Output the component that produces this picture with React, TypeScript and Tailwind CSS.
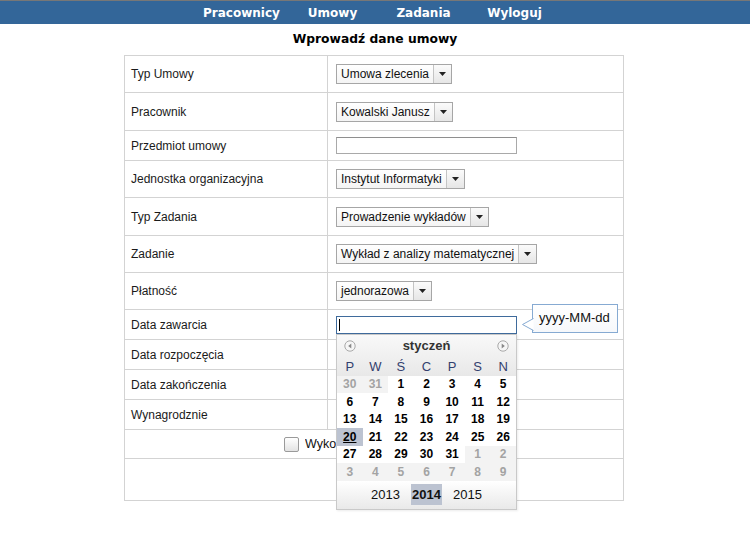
import React from "react";

const sans = "[font-family:'Liberation_Sans',Arial,sans-serif]";
const verdana = "[font-family:'DejaVu_Sans',Verdana,sans-serif]";

const Arrow = () => (
  <svg width="7" height="4" viewBox="0 0 7 4">
    <polygon points="0,0 7,0 3.5,4" fill="#222" />
  </svg>
);

const Select = ({ value }: { value: string }) => (
  <div className="inline-flex h-[20px] items-stretch border border-[#a6a6a6] bg-gradient-to-b from-white to-[#f4f4f4]">
    <span className={`${sans} flex items-center pl-[4px] pr-[4px] text-[12px] text-[#111]`}>
      {value}
    </span>
    <span className="flex w-[18px] items-center justify-center border-l border-[#c4c4c4] bg-gradient-to-b from-[#fbfbfb] to-[#e6e6e6]">
      <Arrow />
    </span>
  </div>
);

const TextInput = () => (
  <div className="h-[17px] w-[181px] border border-[#a9a9a9] border-t-[#8f8f8f] bg-white" />
);

const Circle = ({ dir }: { dir: "l" | "r" }) => (
  <svg width="12" height="12" viewBox="0 0 12 12">
    <circle cx="6" cy="6" r="5.2" fill="#f6f6f6" stroke="#a9a9a9" strokeWidth="1" />
    {dir === "l" ? (
      <polygon points="7.3,3.6 7.3,8.4 4.2,6" fill="#888" />
    ) : (
      <polygon points="4.7,3.6 4.7,8.4 7.8,6" fill="#888" />
    )}
  </svg>
);

type Day = { n: number; other?: boolean; today?: boolean };

const weeks: Day[][] = [
  [{ n: 30, other: true }, { n: 31, other: true }, { n: 1 }, { n: 2 }, { n: 3 }, { n: 4 }, { n: 5 }],
  [{ n: 6 }, { n: 7 }, { n: 8 }, { n: 9 }, { n: 10 }, { n: 11 }, { n: 12 }],
  [{ n: 13 }, { n: 14 }, { n: 15 }, { n: 16 }, { n: 17 }, { n: 18 }, { n: 19 }],
  [{ n: 20, today: true }, { n: 21 }, { n: 22 }, { n: 23 }, { n: 24 }, { n: 25 }, { n: 26 }],
  [{ n: 27 }, { n: 28 }, { n: 29 }, { n: 30 }, { n: 31 }, { n: 1, other: true }, { n: 2, other: true }],
  [3, 4, 5, 6, 7, 8, 9].map((n) => ({ n, other: true })),
];

const Calendar = () => (
  <div className={`${sans} absolute left-0 top-full z-10 w-[181px] border border-[#c9c9c9] bg-white shadow-[1px_1px_2px_rgba(0,0,0,0.08)]`}>
    <div className="bg-gradient-to-b from-[#f9f9f9] to-[#e8e8e8]">
      <div className="flex h-[22px] items-center justify-between px-[7px]">
        <Circle dir="l" />
        <span className="text-[13px] font-bold text-[#333]">styczeń</span>
        <Circle dir="r" />
      </div>
      <div className="grid h-[19px] grid-cols-7 items-center text-center text-[13px] leading-none text-[#33406e]">
        {["P", "W", "Ś", "C", "P", "S", "N"].map((d, i) => (
          <span key={i}>{d}</span>
        ))}
      </div>
    </div>
    <div className="text-[12px] font-bold leading-none">
      {weeks.map((w, i) => (
        <div key={i} className="grid h-[17.5px] grid-cols-7">
          {w.map((d, j) => (
            <span
              key={j}
              className={
                d.today
                  ? "flex items-center justify-center bg-[#bcc3d1] text-black underline"
                  : d.other
                  ? "flex items-center justify-center bg-[#f3f3f3] text-[#a3a3a3]"
                  : "flex items-center justify-center text-black"
              }
            >
              {d.n}
            </span>
          ))}
        </div>
      ))}
    </div>
    <div className="flex h-[28px] items-center justify-center gap-[10px] bg-gradient-to-b from-white to-[#e9e9e9] text-[13px] text-[#111]">
      <span className="w-[31px] text-center">2013</span>
      <span className="flex h-[21px] w-[31px] items-center justify-center bg-[#bcc3d1] font-bold">2014</span>
      <span className="w-[31px] text-center">2015</span>
    </div>
  </div>
);

const Tooltip = () => (
  <div className="absolute left-[196px] top-[-12px] z-10 flex h-[29px] w-[86px] items-center border border-[#86aad2] bg-gradient-to-b from-white to-[#f6f8fb] pl-[6px]">
    <svg className="absolute left-[-11px] top-[13px]" width="12" height="13" viewBox="0 0 12 13">
      <polygon points="11.5,0.5 0.5,6.5 11.5,12.5" fill="white" />
      <polyline points="11.5,0.5 0.5,6.5 11.5,12.5" fill="none" stroke="#86aad2" strokeWidth="1" />
    </svg>
    <span className={`${sans} text-[13px] text-[#111]`}>yyyy-MM-dd</span>
  </div>
);

const Row = ({ label, h, children }: { label: string; h: string; children?: React.ReactNode }) => (
  <div className={`flex border-b border-[#d3d3d3] ${h}`}>
    <div className={`${sans} flex w-[203px] items-center border-r border-[#d3d3d3] pl-[6px] text-[12px] text-[#1a1a1a]`}>
      {label}
    </div>
    <div className="flex flex-1 items-center pl-[8px]">{children}</div>
  </div>
);

export default function App() {
  return (
    <div className="min-h-[550px] w-[750px] bg-white">
      <div className="border-t border-[#777]">
        <nav className={`${verdana} flex h-[23px] items-center justify-center bg-[#336699] pl-[6px] text-[12px] font-bold text-white`}>
          <span className="w-[91px] text-center">Pracownicy</span>
          <span className="w-[91px] text-center">Umowy</span>
          <span className="w-[91px] text-center">Zadania</span>
          <span className="w-[91px] text-center">Wyloguj</span>
        </nav>
      </div>

      <h1 className={`${verdana} flex h-[31px] items-center justify-center text-[12.3px] font-bold text-black`}>
        Wprowadź dane umowy
      </h1>

      <div className="ml-[124px] w-[500px] border border-[#d3d3d3]">
        <Row label="Typ Umowy" h="h-[37px]">
          <Select value="Umowa zlecenia" />
        </Row>
        <Row label="Pracownik" h="h-[38px]">
          <Select value="Kowalski Janusz" />
        </Row>
        <Row label="Przedmiot umowy" h="h-[30px]">
          <TextInput />
        </Row>
        <Row label="Jednostka organizacyjna" h="h-[37px]">
          <Select value="Instytut Informatyki" />
        </Row>
        <Row label="Typ Zadania" h="h-[38px]">
          <Select value="Prowadzenie wykładów" />
        </Row>
        <Row label="Zadanie" h="h-[37px]">
          <Select value="Wykład z analizy matematycznej" />
        </Row>
        <Row label="Płatność" h="h-[37px]">
          <Select value="jednorazowa" />
        </Row>
        <Row label="Data zawarcia" h="h-[30px]">
          <div className="relative">
            <div className="flex h-[18px] w-[181px] items-center border border-[#3f6b9c] bg-white pl-[2px]">
              <span className="h-[12px] w-px bg-black" />
            </div>
            <Calendar />
            <Tooltip />
          </div>
        </Row>
        <Row label="Data rozpoczęcia" h="h-[30px]" />
        <Row label="Data zakończenia" h="h-[30px]" />
        <Row label="Wynagrodznie" h="h-[30px]" />
        <div className="flex h-[29px] items-center border-b border-[#d3d3d3] pl-[159px]">
          <span className="h-[15px] w-[15px] rounded-[2px] border border-[#9a9a9a] bg-gradient-to-b from-white to-[#e3e3e3]" />
          <span className={`${sans} ml-[6px] w-[31px] overflow-hidden whitespace-nowrap text-[12.5px] text-[#111]`}>
            Wykonana
          </span>
        </div>
        <div className="h-[41px]" />
      </div>
    </div>
  );
}
